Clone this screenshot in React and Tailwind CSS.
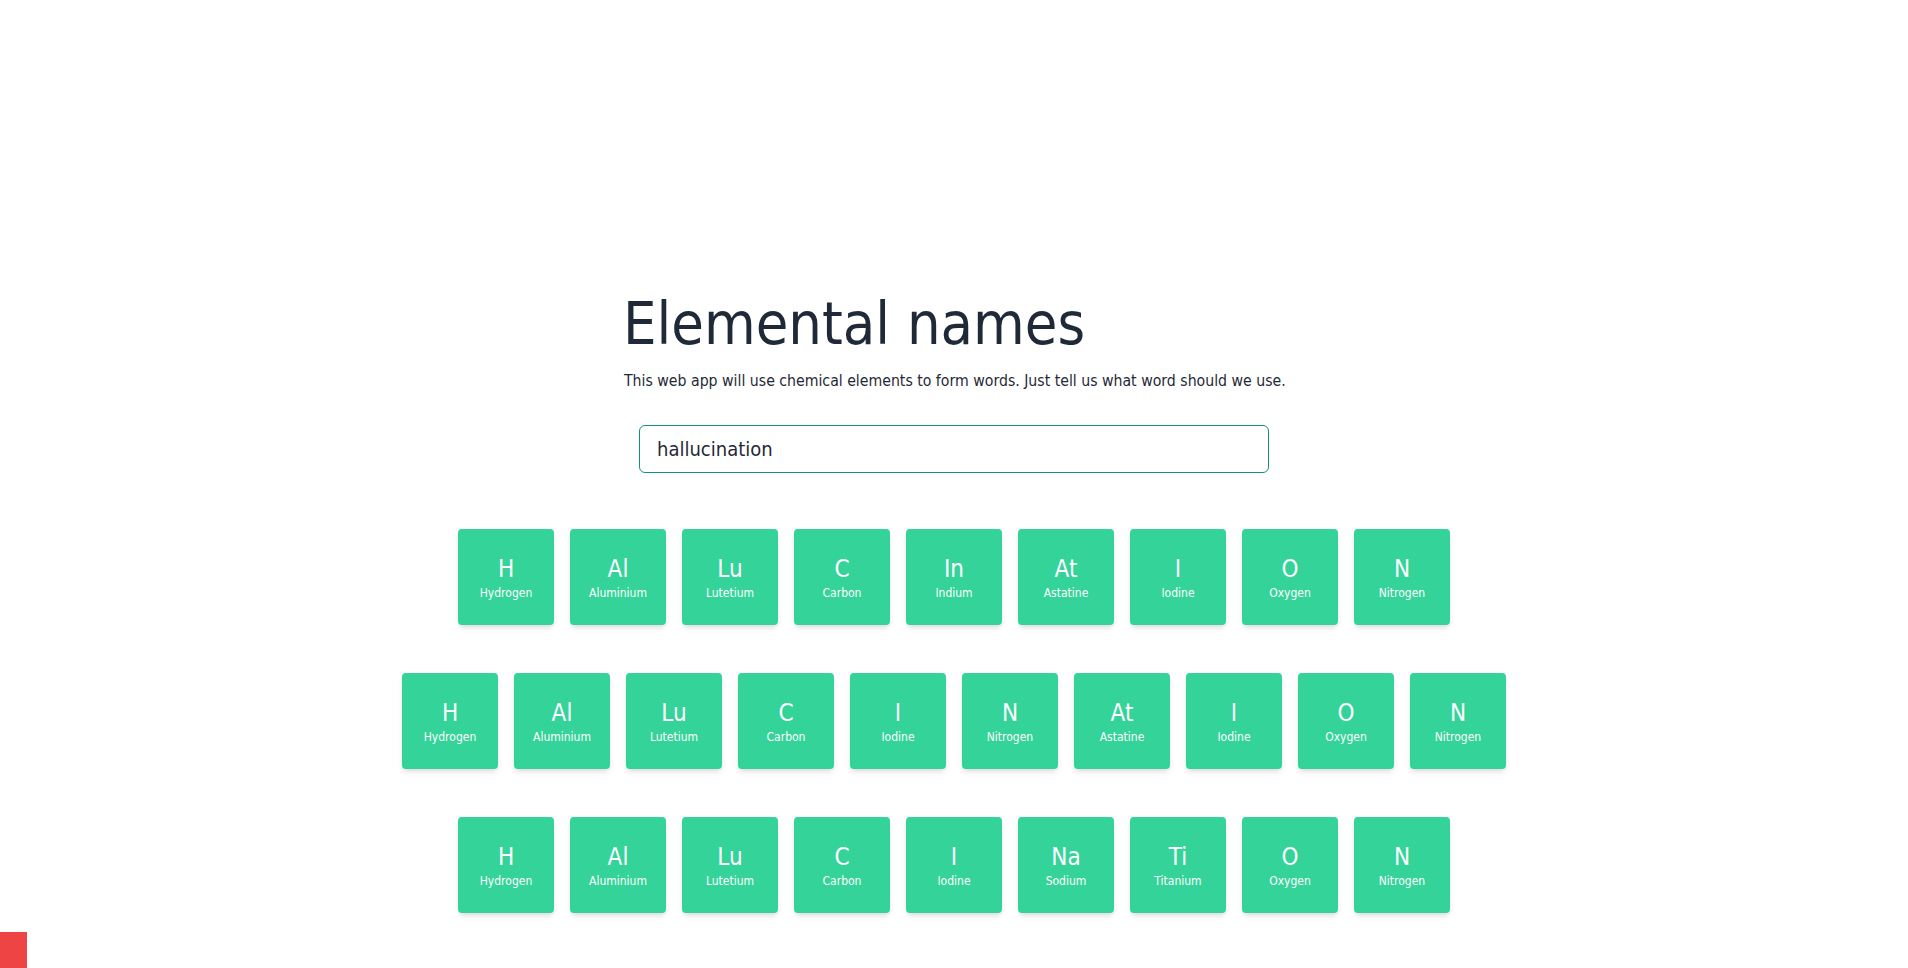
import React from "react";

const rows = [
  [["H","Hydrogen"],["Al","Aluminium"],["Lu","Lutetium"],["C","Carbon"],["In","Indium"],["At","Astatine"],["I","Iodine"],["O","Oxygen"],["N","Nitrogen"]],
  [["H","Hydrogen"],["Al","Aluminium"],["Lu","Lutetium"],["C","Carbon"],["I","Iodine"],["N","Nitrogen"],["At","Astatine"],["I","Iodine"],["O","Oxygen"],["N","Nitrogen"]],
  [["H","Hydrogen"],["Al","Aluminium"],["Lu","Lutetium"],["C","Carbon"],["I","Iodine"],["Na","Sodium"],["Ti","Titanium"],["O","Oxygen"],["N","Nitrogen"]],
];

const font = { fontFamily: "'DejaVu Sans Condensed', 'Liberation Sans', sans-serif" };

function Tile({ s, n }) {
  return (
    <div className="w-24 h-24 rounded-sm bg-[#34d399] shadow-md flex flex-col items-center justify-center text-white">
      <div className="text-[24px] leading-7 mt-[2px]">{s}</div>
      <div className="text-[12px] leading-4 mt-[2px]">{n}</div>
    </div>
  );
}

export default function App() {
  return (
    <div className="min-h-[968px] w-full bg-white relative" style={font}>
      <div className="pt-[288px] flex flex-col items-center">
        <div className="w-[668px]">
          <h1 className="text-[59px] leading-[72px] text-[#1f2937] pl-[3px]">Elemental names</h1>
          <p className="text-[15.7px] leading-6 text-[#1f2937] mt-[9px] pl-[4px]">This web app will use chemical elements to form words. Just tell us what word should we use.</p>
        </div>
        <div className="mt-[32px] w-[630px]">
          <input
            className="w-full h-12 rounded-md border border-[#129379] px-[17px] text-[20px] text-[#1f2937] outline-none"
            style={font}
            defaultValue="hallucination"
          />
        </div>
        <div className="mt-[56px] flex flex-col items-center gap-12">
          {rows.map((r, i) => (
            <div key={i} className="flex gap-4">
              {r.map(([s, n], j) => <Tile key={j} s={s} n={n} />)}
            </div>
          ))}
        </div>
      </div>
      <div className="absolute left-0 bottom-0 w-[27px] h-9 bg-[#ef4444]" />
    </div>
  );
}
